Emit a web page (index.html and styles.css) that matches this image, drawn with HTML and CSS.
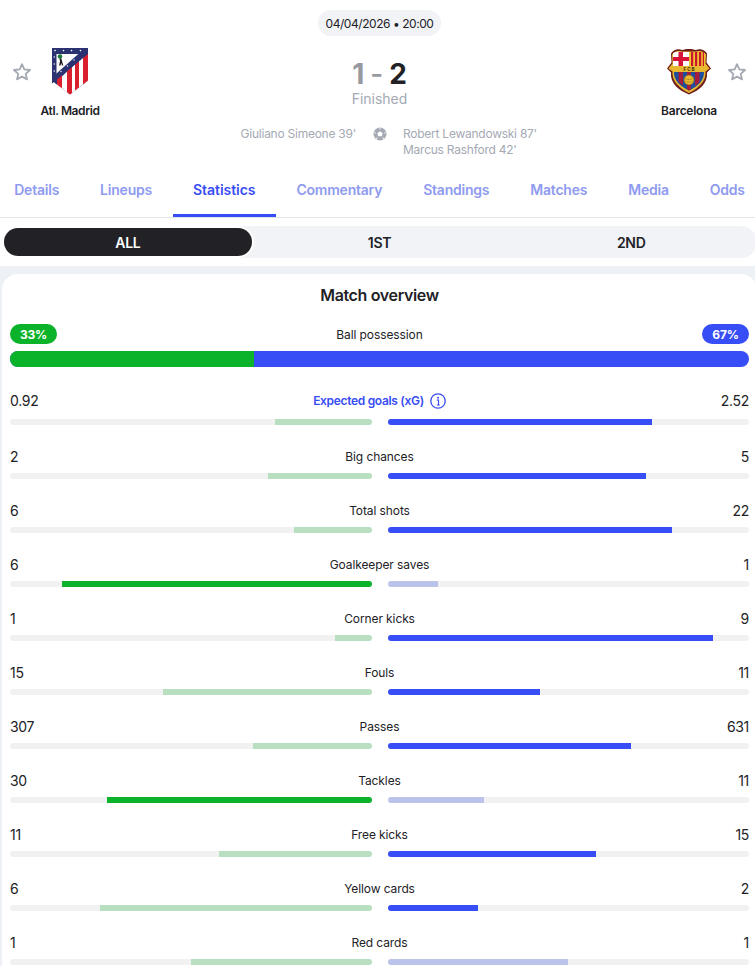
FILE: index.html
```html
<!DOCTYPE html>
<html lang="en">
<head>
<meta charset="utf-8">
<title>Atl. Madrid - Barcelona</title>
<link rel="stylesheet" href="styles.css">
</head>
<body>
<div class="page">
  <header class="match">
    <div class="date">04/04/2026 • 20:00</div>
    <div class="teams">
      <div class="side">
        <svg class="star" viewBox="0 0 20 20"><path d="M10 2.200l2.300 5.200 5.700.6-4.300 3.800 1.300 5.600-5-2.900-5 2.900 1.300-5.600L2 8l5.700-.6z"/></svg>
        <div class="team team-home">
          <svg class="crest crest-atm" viewBox="0 0 36 47">
            <path d="M0 0H36V32.500L18 46.500 0 32.500Z" fill="#2b3272"/>
            <path d="M4.500 6H28L4.500 26Z" fill="#fff"/>
            <path d="M36 4V32.500L18 46.500 5 36.400V33Z" fill="#fff"/>
            <path d="M31 5H36V32.500L31 36.400ZM23 11H27V39.400L23 42.600ZM15 18H20V45L18 46.500 15 44.200ZM5 26H10V40.300L5 36.400Z" fill="#d8202f"/>
            <path d="M36 0V6L0 35.500V29.500L33 0Z" fill="#2b3272"/>
            <path d="M0 29V32.500L5 36.400V26Z" fill="#2b3272"/>
            <circle cx="8" cy="8.500" r="2.300" fill="#1b7a3a"/>
            <path d="M7.500 10.500h1.800l2 7H10l-.8-2.500-.7 2.500H7l1-4z" fill="#1a1a1a"/>
            <g fill="#fff"><circle cx="3" cy="2.600" r=".8"/><circle cx="11.500" cy="2.600" r=".8"/><circle cx="19.500" cy="2.600" r=".8"/><circle cx="28.500" cy="2.600" r=".8"/><circle cx="2.200" cy="9" r=".7"/><circle cx="2.200" cy="16" r=".7"/><circle cx="2.200" cy="23" r=".7"/><circle cx="22" cy="12" r=".7"/><circle cx="15.500" cy="18" r=".7"/><circle cx="9" cy="23.500" r=".7"/></g>
          </svg>
          <div class="name">Atl. Madrid</div>
        </div>
      </div>
      <div class="centre">
        <div class="score"><span class="lost">1</span><span class="lost dash">-</span><span>2</span></div>
        <div class="status">Finished</div>
      </div>
      <div class="side side-right">
        <div class="team team-away">
          <svg class="crest crest-fcb" viewBox="0 0 44 46">
            <path d="M4 5C7 0 12 0 15 1.500 19 0 25 0 29 1.500 32 0 37 0 40 5L39.500 14 44 20 40 24C41 35 32 42 22 46 12 42 3 35 4 24L0 20 4.500 14Z" fill="#6d1d1a"/>
            <path d="M5 6C8 2 12 2 15 3H29C32 2 36 2 39 6L38.500 15 42.500 20 38.500 23C39.500 33 31 40 22 44.500 13 40 4.500 33 5.500 23L1.500 20 5.500 15Z" fill="#e8b830"/>
            <path d="M6 4.500C9 3 12 3 15 3.500H22V17.500H6Z" fill="#fff"/>
            <path d="M11.500 3.500H16V8.500H22V12.500H16V17.500H11.500V12.500H6V8.500H11.500Z" fill="#d8133a"/>
            <path d="M22 3.500H29C32 3 35 3 38 4.500V17.500H22Z" fill="#f2c230"/>
            <path d="M24 3.500H26.200V17.500H24ZM28 3.500H30.200V17.500H28ZM32 3.500H34.200V17.500H32ZM35.800 3.500H37V17.500H35.800Z" fill="#c8182f"/>
            <path d="M7 23.500H37C37.500 32 30 38.500 22 42 14 38.500 6.500 32 7 23.500Z" fill="#1d4f9c"/>
            <path d="M11.500 23.500H16V37L11.500 33.500ZM20 23.500H24V41L22 42 20 41ZM28 23.500H32.500V33.500L28 37.500Z" fill="#a51c3f"/>
            <text class="fcb" x="22" y="22" text-anchor="middle">F C B</text>
            <circle cx="22" cy="31.500" r="5" fill="#e9b92f" stroke="#8a6414" stroke-width=".6"/>
            <path d="M18.500 30c2 1.500 5 1.500 7 0M18.500 33c2 1 5 1 7 0" fill="none" stroke="#8a6414" stroke-width=".5"/>
          </svg>
          <div class="name">Barcelona</div>
        </div>
        <svg class="star" viewBox="0 0 20 20"><path d="M10 2.200l2.300 5.200 5.700.6-4.300 3.800 1.300 5.600-5-2.900-5 2.900 1.300-5.600L2 8l5.700-.6z"/></svg>
      </div>
    </div>
    <div class="scorers">
      <div class="scorer-list scorer-home"><div>Giuliano Simeone 39'</div></div>
      <svg class="ball" viewBox="0 0 14 14"><circle cx="7" cy="7" r="6.500" fill="#a4a9b3"/><path d="M7 4.200l2.700 2-1 3.100H5.300l-1-3.100z" fill="#fff"/><path d="M7 .8V2.500M1.200 5.500l1.700.6M12.800 5.500l-1.700.6M3.300 12l1-1.600M10.700 12l-1-1.600" stroke="#fff" stroke-width=".9"/></svg>
      <div class="scorer-list"><div>Robert Lewandowski 87'</div><div>Marcus Rashford 42'</div></div>
    </div>
  </header>

  <nav class="tabs">
    <a class="tab">Details</a>
    <a class="tab">Lineups</a>
    <a class="tab tab-active">Statistics</a>
    <a class="tab">Commentary</a>
    <a class="tab">Standings</a>
    <a class="tab">Matches</a>
    <a class="tab">Media</a>
    <a class="tab">Odds</a>
  </nav>

  <div class="periods">
    <div class="period period-active">ALL</div>
    <div class="period">1ST</div>
    <div class="period">2ND</div>
  </div>

  <main class="band">
    <section class="card">
      <h2 class="title">Match overview</h2>
      <div class="possession">
        <div class="pos-head">
          <span class="pill pill-home">33%</span>
          <span class="label">Ball possession</span>
          <span class="pill pill-away">67%</span>
        </div>
        <div class="pos-bar"><div class="pos-home" style="width:33%"></div><div class="pos-away"></div></div>
      </div>

      <div class="stat">
        <div class="stat-head stat-head-tall">
          <span class="value">0.92</span>
          <span class="label label-link">Expected goals (xG)
            <svg class="info" viewBox="0 0 16 16"><circle cx="8" cy="8" r="7.200" fill="none" stroke="#374df5" stroke-width="1.300"/><circle cx="8" cy="4.700" r="1" fill="#374df5"/><path d="M6.800 7h1.700v5M6.800 12h3" fill="none" stroke="#374df5" stroke-width="1.200"/></svg>
          </span>
          <span class="value value-right">2.52</span>
        </div>
        <div class="bars">
          <div class="track track-home"><div class="fill home dim" style="width:26.800%"></div></div>
          <div class="track"><div class="fill away" style="width:73.100%"></div></div>
        </div>
      </div>

      <div class="stat">
        <div class="stat-head"><span class="value">2</span><span class="label">Big chances</span><span class="value value-right">5</span></div>
        <div class="bars">
          <div class="track track-home"><div class="fill home dim" style="width:28.700%"></div></div>
          <div class="track"><div class="fill away" style="width:71.400%"></div></div>
        </div>
      </div>

      <div class="stat">
        <div class="stat-head"><span class="value">6</span><span class="label">Total shots</span><span class="value value-right">22</span></div>
        <div class="bars">
          <div class="track track-home"><div class="fill home dim" style="width:21.500%"></div></div>
          <div class="track"><div class="fill away" style="width:78.600%"></div></div>
        </div>
      </div>

      <div class="stat">
        <div class="stat-head"><span class="value">6</span><span class="label">Goalkeeper saves</span><span class="value value-right">1</span></div>
        <div class="bars">
          <div class="track track-home"><div class="fill home" style="width:85.600%"></div></div>
          <div class="track"><div class="fill away dim" style="width:14.100%"></div></div>
        </div>
      </div>

      <div class="stat">
        <div class="stat-head"><span class="value">1</span><span class="label">Corner kicks</span><span class="value value-right">9</span></div>
        <div class="bars">
          <div class="track track-home"><div class="fill home dim" style="width:10.200%"></div></div>
          <div class="track"><div class="fill away" style="width:90%"></div></div>
        </div>
      </div>

      <div class="stat">
        <div class="stat-head"><span class="value">15</span><span class="label">Fouls</span><span class="value value-right">11</span></div>
        <div class="bars">
          <div class="track track-home"><div class="fill home dim" style="width:57.700%"></div></div>
          <div class="track"><div class="fill away" style="width:42.100%"></div></div>
        </div>
      </div>

      <div class="stat">
        <div class="stat-head"><span class="value">307</span><span class="label">Passes</span><span class="value value-right">631</span></div>
        <div class="bars">
          <div class="track track-home"><div class="fill home dim" style="width:32.900%"></div></div>
          <div class="track"><div class="fill away" style="width:67.300%"></div></div>
        </div>
      </div>

      <div class="stat">
        <div class="stat-head"><span class="value">30</span><span class="label">Tackles</span><span class="value value-right">11</span></div>
        <div class="bars">
          <div class="track track-home"><div class="fill home" style="width:73.200%"></div></div>
          <div class="track"><div class="fill away dim" style="width:26.600%"></div></div>
        </div>
      </div>

      <div class="stat">
        <div class="stat-head"><span class="value">11</span><span class="label">Free kicks</span><span class="value value-right">15</span></div>
        <div class="bars">
          <div class="track track-home"><div class="fill home dim" style="width:42.300%"></div></div>
          <div class="track"><div class="fill away" style="width:57.600%"></div></div>
        </div>
      </div>

      <div class="stat">
        <div class="stat-head"><span class="value">6</span><span class="label">Yellow cards</span><span class="value value-right">2</span></div>
        <div class="bars">
          <div class="track track-home"><div class="fill home dim" style="width:75.100%"></div></div>
          <div class="track"><div class="fill away" style="width:24.900%"></div></div>
        </div>
      </div>

      <div class="stat">
        <div class="stat-head"><span class="value">1</span><span class="label">Red cards</span><span class="value value-right">1</span></div>
        <div class="bars">
          <div class="track track-home"><div class="fill home dim" style="width:50%"></div></div>
          <div class="track"><div class="fill away dim" style="width:50%"></div></div>
        </div>
      </div>
    </section>
  </main>
</div>
</body>
</html>
```

FILE: styles.css
```css
* { box-sizing: border-box; }
html, body { margin: 0; padding: 0; background: #fff; }
body {
  height: 966px;
  overflow: hidden;
  font-family: Inter, "Liberation Sans", sans-serif;
  color: #222226;
}
.page { width: 759px; }

.match { padding-top: 10px; display: flex; flex-direction: column; align-items: center; }
.date {
  height: 26px;
  padding: 0 8px;
  display: flex;
  align-items: center;
  background: #f1f3f7;
  border-radius: 13px;
  font-size: 12px;
  letter-spacing: -.45px;
  white-space: nowrap;
}
.teams { width: 100%; margin-top: 12px; display: grid; grid-template-columns: 1fr 1fr 1fr; }
.side { display: flex; align-items: flex-start; padding-left: 12px; }
.side-right { justify-content: flex-end; padding: 0 12px 0 0; }
.star { width: 20px; height: 20px; margin-top: 14px; fill: none; stroke: #a4a9b3; stroke-width: 1.800; stroke-linejoin: round; flex: none; }
.team { width: 76px; display: flex; flex-direction: column; align-items: center; }
.crest { display: block; }
.crest-atm { width: 36px; height: 47px; }
.crest-fcb { width: 44px; height: 47px; }
.fcb { font-size: 4.500px; font-weight: 700; fill: #3a2a10; font-family: Inter, sans-serif; }
.name { margin-top: 8px; font-size: 12px; line-height: 16px; font-weight: 600; white-space: nowrap; }
.team-home .name { letter-spacing: -.4px; }
.team-away .name { letter-spacing: -.25px; }
.centre { padding-top: 10px; display: flex; flex-direction: column; align-items: center; }
.score { display: flex; gap: 6px; font-size: 28px; line-height: 32px; font-weight: 700; }
.lost { color: #96999f; }
.dash { font-weight: 500; }
.status { margin-top: -1px; font-size: 14px; line-height: 20px; color: #a4a9b3; }
.scorers { width: 100%; margin-top: 7px; display: grid; grid-template-columns: 1fr 14px 1fr; column-gap: 16.500px; align-items: start; }
.scorer-list { font-size: 12px; line-height: 16px; letter-spacing: -.25px; color: #a4a9b3; white-space: nowrap; }
.scorer-home { text-align: right; }
.ball { width: 14px; height: 14px; margin-top: 1px; }

.tabs {
  margin-top: 6px;
  height: 54px;
  display: flex;
  justify-content: center;
  border-bottom: 1px solid #e2e3e6;
}
.tab {
  padding: 1px 20.500px 0;
  display: flex;
  align-items: center;
  font-size: 14px;
  letter-spacing: -.22px;
  font-weight: 600;
  color: #8f9bf0;
  border-bottom: 3px solid transparent;
  white-space: nowrap;
}
.tab-active { color: #374df5; border-bottom-color: #374df5; letter-spacing: -.05px; }

.periods {
  margin: 8px 2px;
  padding: 2px;
  display: grid;
  grid-template-columns: repeat(3, 1fr);
  gap: 4px;
  background: #f1f3f7;
  border-radius: 16px;
}
.period { height: 28px; display: flex; align-items: center; justify-content: center; font-size: 14px; letter-spacing: -.3px; font-weight: 600; border-radius: 14px; }
.period-active { color: #fff; background: #222226; box-shadow: 0 0 0 2px #fff; }

.band { background: #edf1f6; padding: 8px 2px 0; height: 700px; }
.card { background: #fff; border-radius: 16px 16px 0 0; padding: 9px 8px 40px; display: flex; flex-direction: column; gap: 21px; }
.title { margin: 0 0 -4px; font-size: 16px; line-height: 24px; letter-spacing: -.35px; font-weight: 600; text-align: center; }
.possession { display: flex; flex-direction: column; gap: 7px; }
.pos-head { display: flex; align-items: center; justify-content: space-between; }
.pos-head .label { padding-top: 2px; }
.pill { width: 47px; height: 20px; display: flex; align-items: center; justify-content: center; border-radius: 10px; color: #fff; font-size: 12px; letter-spacing: -.2px; font-weight: 700; }
.pill-home { background: #0bb32a; }
.pill-away { background: #374df5; }
.pos-bar { height: 16px; display: flex; border-radius: 8px; overflow: hidden; background: #374df5; }
.pos-home { background: #0bb32a; }
.pos-away { flex: 1; }

.label { font-size: 12px; line-height: 16px; letter-spacing: -.1px; white-space: nowrap; text-align: center; }
.label-link { display: flex; align-items: center; gap: 6px; color: #374df5; font-weight: 600; letter-spacing: -.32px; }
.info { width: 16px; height: 16px; }
.value { font-size: 14px; line-height: 20px; letter-spacing: -.3px; }
.value-right { text-align: right; }

.stat { display: flex; flex-direction: column; gap: 7px; }
.stat-head { height: 20px; padding-top: 1px; display: grid; grid-template-columns: 1fr auto 1fr; align-items: center; }
.stat-head-tall { height: 24px; padding-top: 2px; }
.bars { display: grid; grid-template-columns: 1fr 1fr; gap: 16px; }
.track { height: 6px; background: #f1f1f2; border-radius: 3px; overflow: hidden; display: flex; }
.track-home { justify-content: flex-end; }
.fill { height: 100%; }
.home { background: #0bb32a; }
.away { background: #374df5; }
.home.dim { background: #b9dfc1; }
.away.dim { background: #bcc3ea; }
```
